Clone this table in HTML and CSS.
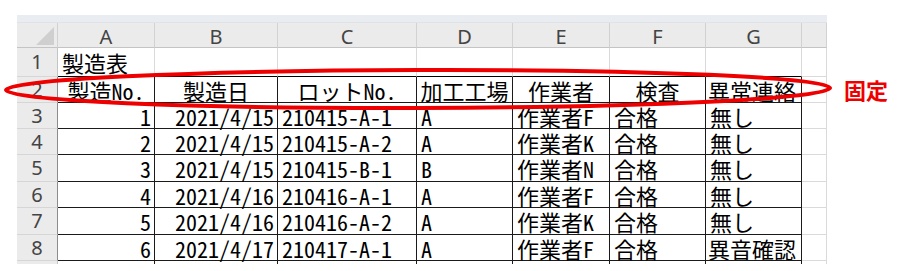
FILE: index.html
```html
<!DOCTYPE html>
<html lang="ja">
<head>
<meta charset="utf-8">
<link rel="stylesheet" href="styles.css">
</head>
<body>
<div class="page">
  <div class="sheet">
    <div class="strip"></div>

    <div class="corner"><span class="tri"></span></div>
    <div class="ch">A</div><div class="ch">B</div><div class="ch">C</div><div class="ch">D</div><div class="ch">E</div><div class="ch">F</div><div class="ch">G</div><div class="ch"></div>

    <div class="rh">1</div>
    <div class="c top l">製造表</div><div class="c top"></div><div class="c top"></div><div class="c top"></div><div class="c top"></div><div class="c top"></div><div class="c top"></div><div class="c"></div>

    <div class="rh tr">2</div>
    <div class="c t m">製造No.</div><div class="c t m">製造日</div><div class="c t m">ロットNo.</div><div class="c t m">加工工場</div><div class="c t m">作業者</div><div class="c t m">検査</div><div class="c t l clip">異常連絡</div><div class="c"></div>

    <div class="rh tr">3</div>
    <div class="c t r">1</div><div class="c t r">2021/4/15</div><div class="c t l">210415-A-1</div><div class="c t l">A</div><div class="c t l">作業者F</div><div class="c t l">合格</div><div class="c t l">無し</div><div class="c"></div>

    <div class="rh tr">4</div>
    <div class="c t r">2</div><div class="c t r">2021/4/15</div><div class="c t l">210415-A-2</div><div class="c t l">A</div><div class="c t l">作業者K</div><div class="c t l">合格</div><div class="c t l">無し</div><div class="c"></div>

    <div class="rh tr">5</div>
    <div class="c t r">3</div><div class="c t r">2021/4/15</div><div class="c t l">210415-B-1</div><div class="c t l">B</div><div class="c t l">作業者N</div><div class="c t l">合格</div><div class="c t l">無し</div><div class="c"></div>

    <div class="rh tr">6</div>
    <div class="c t r">4</div><div class="c t r">2021/4/16</div><div class="c t l">210416-A-1</div><div class="c t l">A</div><div class="c t l">作業者F</div><div class="c t l">合格</div><div class="c t l">無し</div><div class="c"></div>

    <div class="rh tr">7</div>
    <div class="c t r">5</div><div class="c t r">2021/4/16</div><div class="c t l">210416-A-2</div><div class="c t l">A</div><div class="c t l">作業者K</div><div class="c t l">合格</div><div class="c t l">無し</div><div class="c"></div>

    <div class="rh tr">8</div>
    <div class="c t r">6</div><div class="c t r">2021/4/17</div><div class="c t l">210417-A-1</div><div class="c t l">A</div><div class="c t l">作業者F</div><div class="c t l">合格</div><div class="c t l clip">異音確認</div><div class="c"></div>

    <div class="rh sl"></div>
    <div class="c sl tv"></div><div class="c sl tv"></div><div class="c sl tv"></div><div class="c sl tv"></div><div class="c sl tv"></div><div class="c sl tv"></div><div class="c sl tv"></div><div class="c sl"></div>
  </div>
  <div class="label">固定</div>
</div>
<svg class="ring" width="901" height="271" viewBox="0 0 901 271">
  <ellipse cx="418" cy="89" rx="412" ry="19" fill="none" stroke="#ee0000" stroke-width="4" transform="rotate(-0.15 418 89)"/>
</svg>
</body>
</html>
```

FILE: styles.css
```css
html, body {
  margin: 0;
  padding: 0;
  background: #ffffff;
}
body {
  width: 901px;
  height: 271px;
  overflow: hidden;
  position: relative;
  font-family: "Noto Sans CJK JP", "Noto Sans", sans-serif;
}
.page {
  display: flex;
  align-items: flex-start;
  padding: 15px 0 0 17px;
}
.sheet {
  display: grid;
  grid-template-columns: 41px 97px 123px 139px 96px 97px 96px 96px 25px;
  grid-template-rows: 8px 25px 29px 26px 26px 26px 27px 26px 27px 26px 3px;
  background: #ffffff;
}
.strip {
  grid-column: 1 / -1;
  background: #e9edf1;
  border-bottom: 1px solid #dfe3e7;
  box-sizing: border-box;
}
.corner {
  background: #ebebeb;
  border-right: 1px solid #d2d2d2;
  border-bottom: 1px solid #c4c4c4;
  box-sizing: border-box;
  position: relative;
}
.tri {
  position: absolute;
  right: 3px;
  bottom: 2px;
  width: 0;
  height: 0;
  border-left: 18px solid transparent;
  border-bottom: 18px solid #cfcfcf;
}
.ch {
  background: #ebebeb;
  border-right: 1px solid #d2d2d2;
  border-bottom: 1px solid #c4c4c4;
  box-sizing: border-box;
  color: #444444;
  font-family: "Noto Sans", "Liberation Sans", sans-serif;
  font-size: 20px;
  line-height: 22px;
  display: flex;
  align-items: center;
  justify-content: center;
  padding-top: 4px;
}
.rh {
  background: #ebebeb;
  border-right: 1px solid #c4c4c4;
  border-bottom: 1px solid #d6d6d6;
  box-sizing: border-box;
  color: #444444;
  font-family: "Noto Sans", "Liberation Sans", sans-serif;
  font-size: 20px;
  line-height: 22px;
  display: flex;
  align-items: center;
  justify-content: center;
}
.rh.tr {
  border-right-color: #8c8c8c;
}
.rh.sl {
  border-bottom: none;
}
.c {
  border-right: 1px solid #dadada;
  border-bottom: 1px solid #dadada;
  box-sizing: border-box;
  font-size: 22px;
  line-height: 24px;
  color: #000000;
  white-space: nowrap;
  overflow: visible;
  display: flex;
  align-items: center;
  font-feature-settings: "hwid" 1;
}
.c.top {
  border-bottom-color: #000000;
}
.c.t {
  border-right-color: #1a1a1a;
  border-bottom-color: #1a1a1a;
}
.c.sl {
  border-bottom: none;
}
.c.sl.tv {
  border-right-color: #1a1a1a;
}
.c.l {
  justify-content: flex-start;
  padding-left: 4px;
}
.c.r {
  justify-content: flex-end;
  padding-right: 3px;
}
.c.m {
  justify-content: center;
}
.c.clip {
  overflow: hidden;
  padding-left: 2px;
}
.label {
  margin: 62px 0 0 17px;
  color: #ee0000;
  font-family: "Noto Sans CJK JP", sans-serif;
  font-weight: 700;
  font-size: 22px;
  line-height: 24px;
}
.ring {
  position: absolute;
  left: 0;
  top: 0;
  pointer-events: none;
}
```
